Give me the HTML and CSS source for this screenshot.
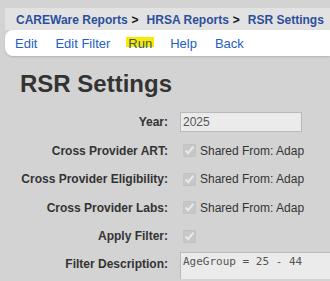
FILE: index.html
```html
<!DOCTYPE html>
<html lang="en">
<head>
  <meta charset="UTF-8" />
  <meta name="viewport" content="width=device-width, initial-scale=1.0" />
  <title>RSR Settings</title>
  <link rel="stylesheet" href="styles.css">
</head>
<body>
  <div class="crumbs">
    <a href="#">CAREWare Reports</a><span class="sep">&gt;</span><a href="#">HRSA Reports</a><span class="sep">&gt;</span><a href="#">RSR Settings</a>
  </div>
  <nav class="menu">
    <a href="#">Edit</a>
    <a href="#">Edit Filter</a>
    <a href="#" class="hl">Run</a>
    <a href="#">Help</a>
    <a href="#">Back</a>
  </nav>

  <h1>RSR Settings</h1>

  <div class="form">
    <label>Year:</label>
    <div><input type="text" class="field" value="2025" disabled></div>

    <label>Cross Provider ART:</label>
    <div class="check"><input type="checkbox" checked disabled> Shared From: Adap</div>

    <label>Cross Provider Eligibility:</label>
    <div class="check"><input type="checkbox" checked disabled> Shared From: Adap</div>

    <label>Cross Provider Labs:</label>
    <div class="check"><input type="checkbox" checked disabled> Shared From: Adap</div>

    <label>Apply Filter:</label>
    <div class="check"><input type="checkbox" checked disabled></div>

    <label class="top">Filter Description:</label>
    <div class="top clip"><textarea class="desc" disabled>AgeGroup = 25 - 44</textarea></div>
  </div>
</body>
</html>
```

FILE: styles.css
```css
html, body {
  overflow: hidden;
  height: 281px;
}

body {
  margin: 0;
  font-family: "Liberation Sans", Arial, sans-serif;
  background-color: #d3d3d3;
  color: #333333;
}

a {
  text-decoration: none;
}

.crumbs {
  margin: 8px 0 0 5px;
  height: 22px;
  padding-left: 11px;
  background-color: #e2e2e2;
  font-size: 12px;
  font-weight: bold;
  line-height: 24px;
  white-space: nowrap;
  overflow: hidden;
}

.crumbs a {
  color: #2c4f9b;
}

.crumbs .sep {
  color: #111111;
  margin: 0 8px 0 4px;
}

.menu {
  display: flex;
  gap: 18px;
  margin-left: 5px;
  height: 26px;
  padding-left: 10px;
  background-color: #ffffff;
  border-radius: 8px 0 0 8px;
  box-shadow: 0 1px 2px rgba(0, 0, 0, 0.15);
  font-size: 13px;
  line-height: 27px;
  white-space: nowrap;
}

.menu a {
  color: #2360c4;
}

.menu .hl {
  margin: 0 -2px;
  padding: 0 2px;
  color: #2c5a6e;
  background: linear-gradient(#fbe900, #fbe900) no-repeat;
  background-size: 100% 10px;
  background-position: 0 7px;
}

h1 {
  margin: 14px 0 10px 20px;
  font-size: 24px;
  color: #333333;
}

.form {
  display: grid;
  grid-template-columns: 168px 1fr;
  column-gap: 12px;
  grid-auto-rows: 28.5px;
  align-items: center;
  font-size: 12px;
}

.form label {
  text-align: right;
  font-weight: bold;
  white-space: nowrap;
}

.form .top {
  align-self: start;
}

.form label.top {
  padding-top: 6px;
}

.clip {
  overflow: hidden;
  height: 28.5px;
}

.field {
  box-sizing: border-box;
  width: 122px;
  height: 20px;
  margin: 0;
  padding: 0 2px;
  border: 1px solid #b9b9b9;
  background-color: #ebebeb;
  color: #555555;
  font-family: "Liberation Sans", Arial, sans-serif;
  font-size: 12px;
}

.check {
  display: flex;
  align-items: center;
  white-space: nowrap;
}

.check input {
  width: 13px;
  height: 13px;
  margin: 0 4px 0 3px;
}

.desc {
  box-sizing: border-box;
  display: block;
  width: 200px;
  height: 50px;
  margin: 1px 0 0;
  padding: 2px;
  border: 1px solid #b9b9b9;
  background-color: #ebebeb;
  color: #555555;
  font-family: "DejaVu Sans Mono", monospace;
  font-size: 11px;
  resize: none;
}
```
